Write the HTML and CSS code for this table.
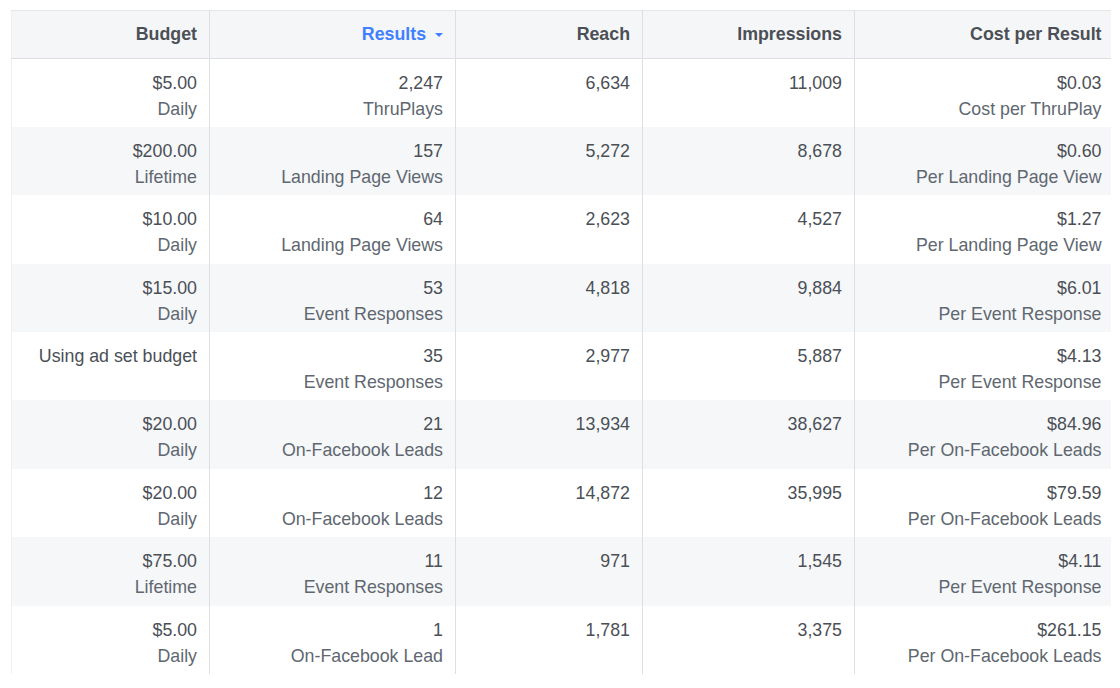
FILE: index.html
```html
<!DOCTYPE html>
<html lang="en">
<head>
<meta charset="utf-8">
<title>Ads Results</title>
<link rel="stylesheet" href="styles.css">
</head>
<body>
<div class="wrap">
<table class="grid">
  <colgroup>
    <col class="c-budget"><col class="c-results"><col class="c-reach"><col class="c-impr"><col class="c-cost">
  </colgroup>
  <thead>
    <tr>
      <th>Budget</th>
      <th class="sorted">Results <span class="caret"></span></th>
      <th>Reach</th>
      <th>Impressions</th>
      <th>Cost per Result</th>
    </tr>
  </thead>
  <tbody>
    <tr><td><div class="v">$5.00</div><div class="s">Daily</div></td><td><div class="v">2,247</div><div class="s">ThruPlays</div></td><td><div class="v">6,634</div></td><td><div class="v">11,009</div></td><td><div class="v">$0.03</div><div class="s">Cost per ThruPlay</div></td></tr>
    <tr><td><div class="v">$200.00</div><div class="s">Lifetime</div></td><td><div class="v">157</div><div class="s">Landing Page Views</div></td><td><div class="v">5,272</div></td><td><div class="v">8,678</div></td><td><div class="v">$0.60</div><div class="s">Per Landing Page View</div></td></tr>
    <tr><td><div class="v">$10.00</div><div class="s">Daily</div></td><td><div class="v">64</div><div class="s">Landing Page Views</div></td><td><div class="v">2,623</div></td><td><div class="v">4,527</div></td><td><div class="v">$1.27</div><div class="s">Per Landing Page View</div></td></tr>
    <tr><td><div class="v">$15.00</div><div class="s">Daily</div></td><td><div class="v">53</div><div class="s">Event Responses</div></td><td><div class="v">4,818</div></td><td><div class="v">9,884</div></td><td><div class="v">$6.01</div><div class="s">Per Event Response</div></td></tr>
    <tr><td><div class="v">Using ad set budget</div></td><td><div class="v">35</div><div class="s">Event Responses</div></td><td><div class="v">2,977</div></td><td><div class="v">5,887</div></td><td><div class="v">$4.13</div><div class="s">Per Event Response</div></td></tr>
    <tr><td><div class="v">$20.00</div><div class="s">Daily</div></td><td><div class="v">21</div><div class="s">On-Facebook Leads</div></td><td><div class="v">13,934</div></td><td><div class="v">38,627</div></td><td><div class="v">$84.96</div><div class="s">Per On-Facebook Leads</div></td></tr>
    <tr><td><div class="v">$20.00</div><div class="s">Daily</div></td><td><div class="v">12</div><div class="s">On-Facebook Leads</div></td><td><div class="v">14,872</div></td><td><div class="v">35,995</div></td><td><div class="v">$79.59</div><div class="s">Per On-Facebook Leads</div></td></tr>
    <tr><td><div class="v">$75.00</div><div class="s">Lifetime</div></td><td><div class="v">11</div><div class="s">Event Responses</div></td><td><div class="v">971</div></td><td><div class="v">1,545</div></td><td><div class="v">$4.11</div><div class="s">Per Event Response</div></td></tr>
    <tr><td><div class="v">$5.00</div><div class="s">Daily</div></td><td><div class="v">1</div><div class="s">On-Facebook Lead</div></td><td><div class="v">1,781</div></td><td><div class="v">3,375</div></td><td><div class="v">$261.15</div><div class="s">Per On-Facebook Leads</div></td></tr>
  </tbody>
</table>
</div>
</body>
</html>
```

FILE: styles.css
```css
html, body {
  margin: 0;
  padding: 0;
  background: #ffffff;
}

body {
  font-family: "Liberation Sans", Arial, Helvetica, sans-serif;
  font-size: 17.8px;
  color: #4b4f56;
}

.wrap {
  padding: 10px 10px 0 11px;
}

.grid {
  width: 1099px;
  table-layout: fixed;
  border-collapse: collapse;
  border-spacing: 0;
}

.c-budget { width: 198px; }
.c-results { width: 246px; }
.c-reach { width: 187px; }
.c-impr { width: 212px; }
.c-cost { width: 256px; }

.grid th {
  height: 47px;
  padding: 0 12px 0 8px;
  text-align: right;
  font-weight: bold;
  color: #4b4f56;
  background: #f5f6f7;
  border-top: 1px solid #e4e6ea;
  border-bottom: 1px solid #dddfe2;
  border-right: 1px solid #dddfe2;
  vertical-align: middle;
  white-space: nowrap;
}

.grid th:last-child,
.grid td:last-child {
  border-right: none;
  padding-right: 9px;
}

.grid th.sorted {
  color: #4080ff;
}

.caret {
  display: inline-block;
  width: 0;
  height: 0;
  margin-left: 4px;
  vertical-align: middle;
  border-left: 4px solid transparent;
  border-right: 4px solid transparent;
  border-top: 4px solid #4080ff;
}

.grid tbody tr {
  height: 68.4px;
}

.grid tbody tr:nth-child(even) td {
  background: #f6f7f9;
}

.grid td {
  padding: 11px 12px 0 8px;
  text-align: right;
  vertical-align: top;
  border-right: 1px solid #dddfe2;
  line-height: 26px;
  white-space: nowrap;
}

.grid td:first-child,
.grid th:first-child {
  border-left: 1px solid #eef0f2;
}

.v {
  color: #4b4f56;
}

.s {
  color: #606770;
}
```
